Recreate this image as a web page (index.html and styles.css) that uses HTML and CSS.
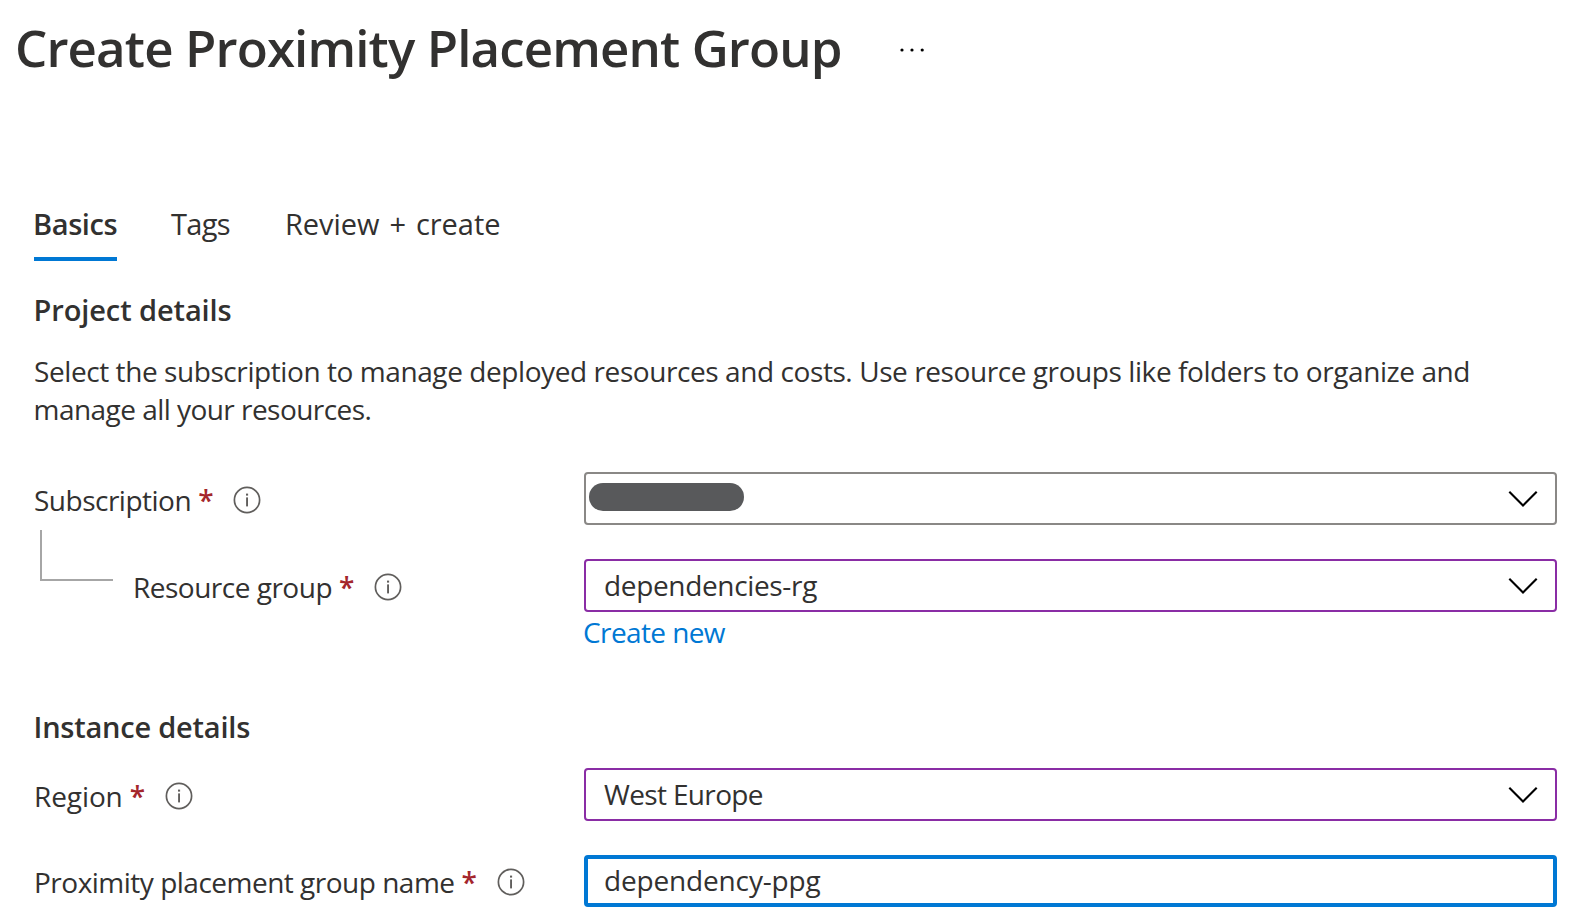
FILE: index.html
```html
<!DOCTYPE html>
<html lang="en">
<head>
<meta charset="utf-8">
<title>Create Proximity Placement Group</title>
<link rel="stylesheet" href="styles.css">
</head>
<body>
<svg class="defs" width="0" height="0" aria-hidden="true">
  <symbol id="info" viewBox="0 0 28 28">
    <circle cx="14" cy="14" r="12.6" fill="none" stroke="#605e5c" stroke-width="1.7"/>
    <rect x="13.1" y="11.4" width="1.9" height="9" fill="#605e5c"/>
    <rect x="13" y="7.6" width="2.1" height="2" fill="#605e5c"/>
  </symbol>
  <symbol id="chevron" viewBox="0 0 30 18">
    <path d="M1.3 1.7 15 15.4 28.7 1.7" fill="none" stroke="#000" stroke-width="2.1"/>
  </symbol>
</svg>
<header class="header">
  <h1 class="title">Create Proximity Placement Group</h1>
  <svg class="more" viewBox="0 0 26 6"><circle cx="3" cy="3" r="1.6"/><circle cx="13" cy="3" r="1.6"/><circle cx="23.2" cy="3" r="1.6"/></svg>
</header>
<nav class="tabs">
  <a class="tab tab-active">Basics</a>
  <a class="tab tab-tags">Tags</a>
  <a class="tab tab-review">Review + create</a>
</nav>
<main class="form">
  <h2 class="heading">Project details</h2>
  <p class="intro">Select the subscription to manage deployed resources and costs. Use resource groups like folders to organize and<br><span class="intro-end">manage all your resources.</span></p>
  <div class="row">
    <label class="label"><span>Subscription</span><span class="required">*</span><svg class="info"><use href="#info"/></svg></label>
    <div class="field field-redacted"><span class="redaction"></span><svg class="chevron"><use href="#chevron"/></svg></div>
  </div>
  <div class="row row-child">
    <span class="connector"></span>
    <label class="label label-child"><span>Resource group</span><span class="required">*</span><svg class="info"><use href="#info"/></svg></label>
    <div class="field field-changed"><span class="value-group">dependencies-rg</span><svg class="chevron"><use href="#chevron"/></svg></div>
  </div>
  <a class="create">Create new</a>
  <h2 class="heading heading-instance">Instance details</h2>
  <div class="row">
    <label class="label label-region"><span>Region</span><span class="required">*</span><svg class="info"><use href="#info"/></svg></label>
    <div class="field field-changed"><span class="value-region">West Europe</span><svg class="chevron"><use href="#chevron"/></svg></div>
  </div>
  <div class="row row-name">
    <label class="label"><span>Proximity placement group name</span><span class="required">*</span><svg class="info"><use href="#info"/></svg></label>
    <div class="field field-focus"><span class="value-name">dependency-ppg</span></div>
  </div>
</main>
</body>
</html>
```
FILE: styles.css
```css
* { box-sizing: border-box; }
body {
  margin: 0;
  height: 924px;
  overflow: hidden;
  background: #fff;
  color: #323130;
  font: 400 28px/38px "Open Sans", "Noto Sans", sans-serif;
  white-space: nowrap;
}
.defs { position: absolute; }
.header { display: flex; padding: 12px 0 0 15px; }
.title { margin: 0; width: 884px; font-size: 51px; line-height: 70px; font-weight: 600; letter-spacing: -0.87px; }
.more { width: 26px; height: 6px; margin-top: 35px; }
.tabs { display: flex; padding: 122px 0 0 34px; font-size: 29px; line-height: 40px; }
.tab { padding-bottom: 13px; }
.tab-active { width: 83px; margin-right: 54px; font-weight: 600; letter-spacing: -0.4px; border-bottom: 4.5px solid #0078d4; text-indent: -1px; }
.tab-tags { width: 114px; letter-spacing: -0.7px; }
.tab-review { letter-spacing: -0.05px; word-spacing: 2.5px; }
.form { padding: 28.5px 21px 0 33px; }
.heading { margin: 0; font-size: 29px; line-height: 40px; font-weight: 600; letter-spacing: -0.1px; text-indent: 0.5px; }
.heading-instance { margin: 55px 0 21px; letter-spacing: -0.22px; }
.intro { margin: 22px 0 44px 1px; letter-spacing: -0.42px; }
.intro-end { letter-spacing: -0.54px; margin-left: -0.5px; }
.row { display: flex; height: 53px; }
.row-child, .row-name { margin-top: 34px; }
.row-name { height: 52px; }
.label { display: flex; flex: none; align-items: center; width: 551px; padding: 3px 0 0 1px; letter-spacing: -0.5px; }
.label-child { width: 452px; }
.label-region { letter-spacing: -0.1px; }
.required { width: 14px; margin-left: 7px; color: #a4262c; font-weight: 600; letter-spacing: 0; }
.info { width: 28px; height: 28px; margin-left: 21px; }
.connector { width: 73px; height: 51px; margin: -29px 19px 0 7px; border: solid #a6a6a6; border-width: 0 0 2px 2px; }
.field { display: flex; flex: 1; align-items: center; justify-content: space-between; padding: 0 17px 0 18px; border: 2px solid #8a8886; border-radius: 4px; }
.field-redacted { padding-left: 3px; }
.field-changed { border-color: #8a2da5; }
.field-focus { border: 4px solid #0078d4; padding: 0 16px 2px; }
.redaction { width: 155px; height: 28px; margin-bottom: 3px; border-radius: 14px; background: #58595b; }
.value-group { letter-spacing: -0.34px; }
.value-region { letter-spacing: -0.65px; }
.value-name { letter-spacing: -0.16px; }
.chevron { width: 30px; height: 18px; margin-top: 2px; }
.create { display: block; width: 142px; margin-left: 550px; line-height: 40px; letter-spacing: -0.6px; color: #0078d4; }
```
